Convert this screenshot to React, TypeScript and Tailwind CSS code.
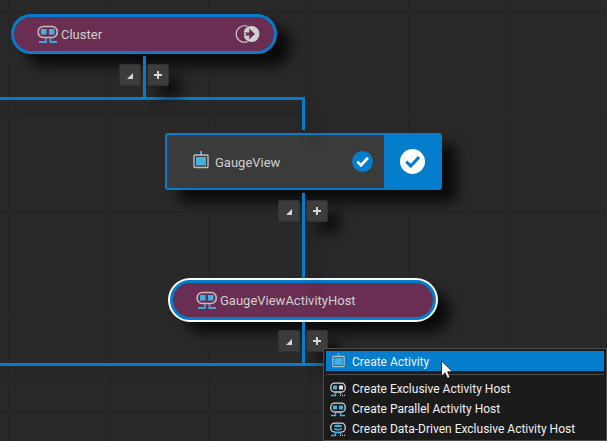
import type { ReactNode } from "react";

function HostIcon({ className }: { className?: string }) {
  return (
    <svg viewBox="0 0 22 18" fill="none" aria-hidden="true" className={className}>
      <rect x="1.2" y="1.5" width="19" height="11" rx="5" stroke="#c8b9c2" strokeWidth="1.6" />
      <path d="M4 4h5.5v5.5H4zM12 4h5.5v5.5H12z" fill="#41b1e1" />
      <path d="M8 13.2h1.8V18H2v-2h6zM12.5 13.2h1.8V16H20v2h-7.5z" fill="#45a3d6" />
    </svg>
  );
}

function ActivityIcon({ className }: { className?: string }) {
  return (
    <svg viewBox="0 0 16 18" fill="none" aria-hidden="true" className={className}>
      <path d="M8 0v4" stroke="#41b1e1" strokeWidth="2" />
      <rect x="1" y="4" width="14" height="12.5" rx="1" stroke="#b9bec1" strokeWidth="1.4" />
      <path d="M3 6h10v8.5H3z" fill="#41b1e1" />
    </svg>
  );
}

type HostKind = "exclusive" | "parallel" | "data";

function MenuHostIcon({ kind }: { kind: HostKind }) {
  return (
    <svg viewBox="0 0 16 15" fill="none" aria-hidden="true" className="h-[15px] w-4">
      <rect x="0.8" y="1.2" width="14.4" height="8.8" rx="3.8" stroke="#d4d4d4" strokeWidth="1.3" />
      {kind === "data" ? (
        <>
          <path d="M4 3h8v8.5c0 .8-1.8 1.5-4 1.5s-4-.7-4-1.5z" fill="#1b1b1c" />
          <path d="M4 3.4c1-.9 7-.9 8 0v1.2c-1 .9-7 .9-8 0zM4 6c1 .9 7 .9 8 0v1.5c-1 .9-7 .9-8 0zM4 8.9c1 .9 7 .9 8 0v1.6c-1 1.2-7 1.2-8 0z" fill="#41b1e1" />
        </>
      ) : (
        <>
          <path d="M3 3.5h4v4H3z" fill="#41b1e1" />
          <path d="M9 3.5h4v4H9z" fill={kind === "exclusive" ? "#e4e4e4" : "#41b1e1"} />
        </>
      )}
      <path d="M5.5 10.8v2.9M1 13.5h5" stroke="#41b1e1" strokeWidth="1.4" />
      {kind === "parallel" ? (
        <path d="M10.5 10.8v2.9M10 13.5h5" stroke="#41b1e1" strokeWidth="1.4" />
      ) : (
        <path d="M10.5 11v1M10 13.4h5" stroke="#d4d4d4" strokeWidth="1.2" strokeDasharray="1 1" />
      )}
    </svg>
  );
}

function CheckIcon({ className, disc, tick }: { className?: string; disc: string; tick: string }) {
  return (
    <svg viewBox="0 0 24 24" fill="none" aria-hidden="true" className={className}>
      <circle cx="12" cy="12" r="12" fill={disc} />
      <path d="M6 12.2l4.3 4.1 8-8.6" stroke={tick} strokeWidth="3" />
    </svg>
  );
}

function TransitionIcon() {
  return (
    <svg viewBox="0 0 25 18" fill="none" aria-hidden="true" className="h-[18px] w-[25px]">
      <path d="M12.5 1.4A8.2 8.2 0 1 0 12.5 16.6" stroke="#d0d0d0" strokeWidth="1.2" />
      <circle cx="16.5" cy="9" r="8" fill="#d0d0d0" />
      <path d="M8 7.4h6.2V3.6l5.8 5.4-5.8 5.4v-3.8H8z" fill="#692e51" />
      <path d="M9 9h2" stroke="#d0d0d0" strokeWidth="2" />
    </svg>
  );
}

function NodeTools({ className }: { className: string }) {
  const button =
    "flex size-[22px] items-center justify-center rounded-[2px] border border-[#303030] bg-[#3c3c3c] text-[#d6d6d6]";
  return (
    <div className={`absolute flex gap-1.5 ${className}`}>
      <button type="button" aria-label="Collapse" className={button}>
        <svg viewBox="0 0 6 6" className="mt-0.5 size-1.5" aria-hidden="true">
          <path d="M6 0v6H0z" fill="currentColor" />
        </svg>
      </button>
      <button type="button" aria-label="Add" className={`${button} shadow-[12px_12px_12px_#0009]`}>
        <svg viewBox="0 0 8 8" className="size-2" aria-hidden="true">
          <path d="M4 0v8M0 4h8" stroke="currentColor" strokeWidth="2" />
        </svg>
      </button>
    </div>
  );
}

function MenuItem({ icon, label, active }: { icon: ReactNode; label: string; active?: boolean }) {
  return (
    <button
      type="button"
      role="menuitem"
      className={`flex h-5 w-full items-center gap-1.5 pt-0.5 pl-1 text-left whitespace-nowrap ${active ? "bg-[#057dcd]" : ""}`}
    >
      <span className="flex w-4 shrink-0 justify-center">{icon}</span>
      {label}
    </button>
  );
}

const HOST_ITEMS: { kind: HostKind; label: string }[] = [
  { kind: "exclusive", label: "Create Exclusive Activity Host" },
  { kind: "parallel", label: "Create Parallel Activity Host" },
  { kind: "data", label: "Create Data-Driven Exclusive Activity Host" },
];

export default function App() {
  return (
    <main className="relative min-h-screen w-full overflow-hidden bg-[#292929] bg-[linear-gradient(to_right,#242424_1px,transparent_1px),linear-gradient(to_bottom,#242424_1px,transparent_1px)] bg-[size:100px_100px] bg-[position:9px_12px] font-['Roboto',sans-serif] text-[13px] leading-5 text-[#d0d0d0]">
      {/* Nodes */}
      <div className="absolute top-[14px] left-[11px] flex h-10 w-[266px] items-center rounded-full border-[3px] border-[#057dcd] bg-[#692e51] pr-3.5 pl-[23px] shadow-[14px_12px_14px_#000c]">
        <HostIcon className="mr-0.5 h-[18px] w-[22px]" />
        <span className="flex-1 pt-0.5">Cluster</span>
        <TransitionIcon />
      </div>

      <div className="absolute top-[133px] left-[165px] flex h-[57px] w-[277px] rounded-[3px] border-2 border-[#057dcd] bg-[#3b3b3b] shadow-[14px_12px_14px_#000c]">
        <div className="flex flex-1 items-center pr-[11px] pl-[26px]">
          <ActivityIcon className="mr-1.5 mb-1 h-[18px] w-4" />
          <span className="flex-1 pt-0.5">GaugeView</span>
          <CheckIcon className="size-[21px]" disc="#057dcd" tick="#fff" />
        </div>
        <div className="flex w-14 items-center justify-center bg-[#057dcd]">
          <CheckIcon className="size-[25px]" disc="#fff" tick="#057dcd" />
        </div>
      </div>

      <div className="absolute top-[280px] left-[170px] flex h-10 w-[266px] items-center rounded-full border-[3px] border-[#057dcd] bg-[#692e51] pl-[23px] shadow-[0_0_0_2px_#fff,14px_12px_14px_#000c]">
        <HostIcon className="mr-0.5 h-[18px] w-[22px]" />
        <span className="pt-0.5">GaugeViewActivityHost</span>
      </div>

      {/* Links between nodes */}
      <svg
        className="pointer-events-none absolute top-0 left-0 h-[441px] w-full drop-shadow-[12px_14px_6px_#0004]"
        fill="none"
        aria-hidden="true"
      >
        <path
          d="M144.5 56v42.5M0 98.5h305M303.5 98v32M303.5 193v85M303.5 322v42M-20 364.5h360"
          stroke="#057dcd"
          strokeWidth="3"
        />
      </svg>

      <NodeTools className="top-[64px] left-[119px]" />
      <NodeTools className="top-[200px] left-[278px]" />
      <NodeTools className="top-[330px] left-[278px]" />

      {/* Context menu */}
      <div
        role="menu"
        className="absolute top-[348px] left-[323px] w-[284px] border border-[#4d4d4d] bg-[#1b1b1c] p-0.5 text-xs leading-5 text-[#f1f1f1]"
      >
        <MenuItem active label="Create Activity" icon={<ActivityIcon className="mb-1 h-[15px] w-[13px]" />} />
        <hr className="my-[3px] border-[#4d4d4d]" />
        {HOST_ITEMS.map((item) => (
          <MenuItem key={item.kind} label={item.label} icon={<MenuHostIcon kind={item.kind} />} />
        ))}
      </div>

      {/* Pointer */}
      <svg viewBox="0 0 12 19" className="pointer-events-none absolute top-[360px] left-[441px] h-[19px] w-3" aria-hidden="true">
        <path d="M.5.8v15.4l3.6-3.4 2.4 5.5 2.5-1.1-2.4-5.4h4.9z" fill="#fff" stroke="#111" strokeWidth="0.8" />
      </svg>
    </main>
  );
}
